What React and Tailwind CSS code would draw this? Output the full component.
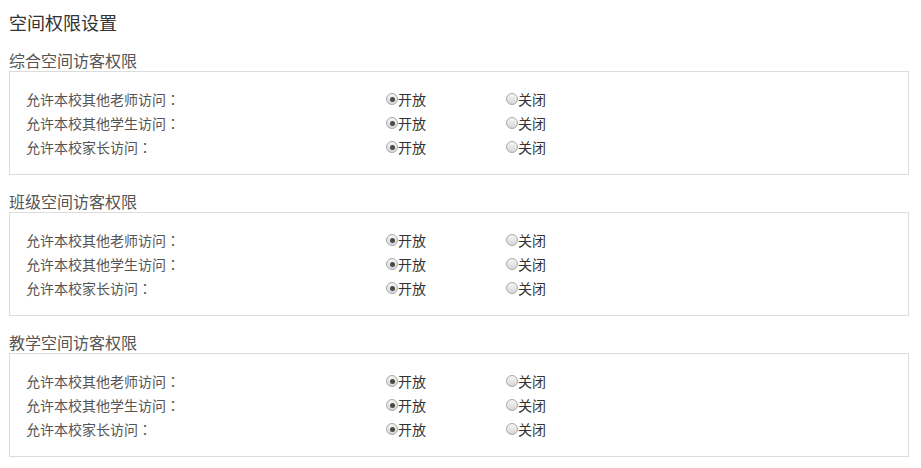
import React from 'react'

const sections = ['综合空间访客权限', '班级空间访客权限', '教学空间访客权限']
const rows = ['允许本校其他老师访问', '允许本校其他学生访问', '允许本校家长访问']

function Radio({ checked, label }) {
  return (
    <label className="flex items-center">
      <span className="w-[12px] h-[12px] rounded-full border border-[#a9a9a9] bg-gradient-to-b from-[#f4f4f4] to-[#d8d8d8] flex items-center justify-center">
        {checked && <span className="w-[5px] h-[5px] rounded-full bg-[#4a4a4a]" />}
      </span>
      <span className="text-[14px] text-[#333]">{label}</span>
    </label>
  )
}

export default function App() {
  return (
    <div className="w-[921px] h-[468px] bg-white px-[9px] pt-[10px] font-['Microsoft_YaHei','Noto_Sans_CJK_SC',sans-serif] overflow-hidden">
      <h1 className="h-[24px] leading-[24px] text-[18px] text-[#333]">空间权限设置</h1>
      <div className="mt-[15px]">
        {sections.map((s) => (
          <div key={s} className="mb-[15px]">
            <h2 className="h-[22px] leading-[22px] text-[16px] text-[#555]">{s}</h2>
            <div className="w-[900px] border border-[#dcdcdc] px-[16px] py-[15px]">
              {rows.map((r) => (
                <div key={r} className="flex items-center h-[24px]">
                  <div className="w-[360px] text-[14px] text-[#555]">
                    {r}
                    <span className="font-['Noto_Sans_CJK_TC',sans-serif]">：</span>
                  </div>
                  <div className="w-[120px]"><Radio checked label="开放" /></div>
                  <div className="w-[120px]"><Radio label="关闭" /></div>
                </div>
              ))}
            </div>
          </div>
        ))}
      </div>
    </div>
  )
}
